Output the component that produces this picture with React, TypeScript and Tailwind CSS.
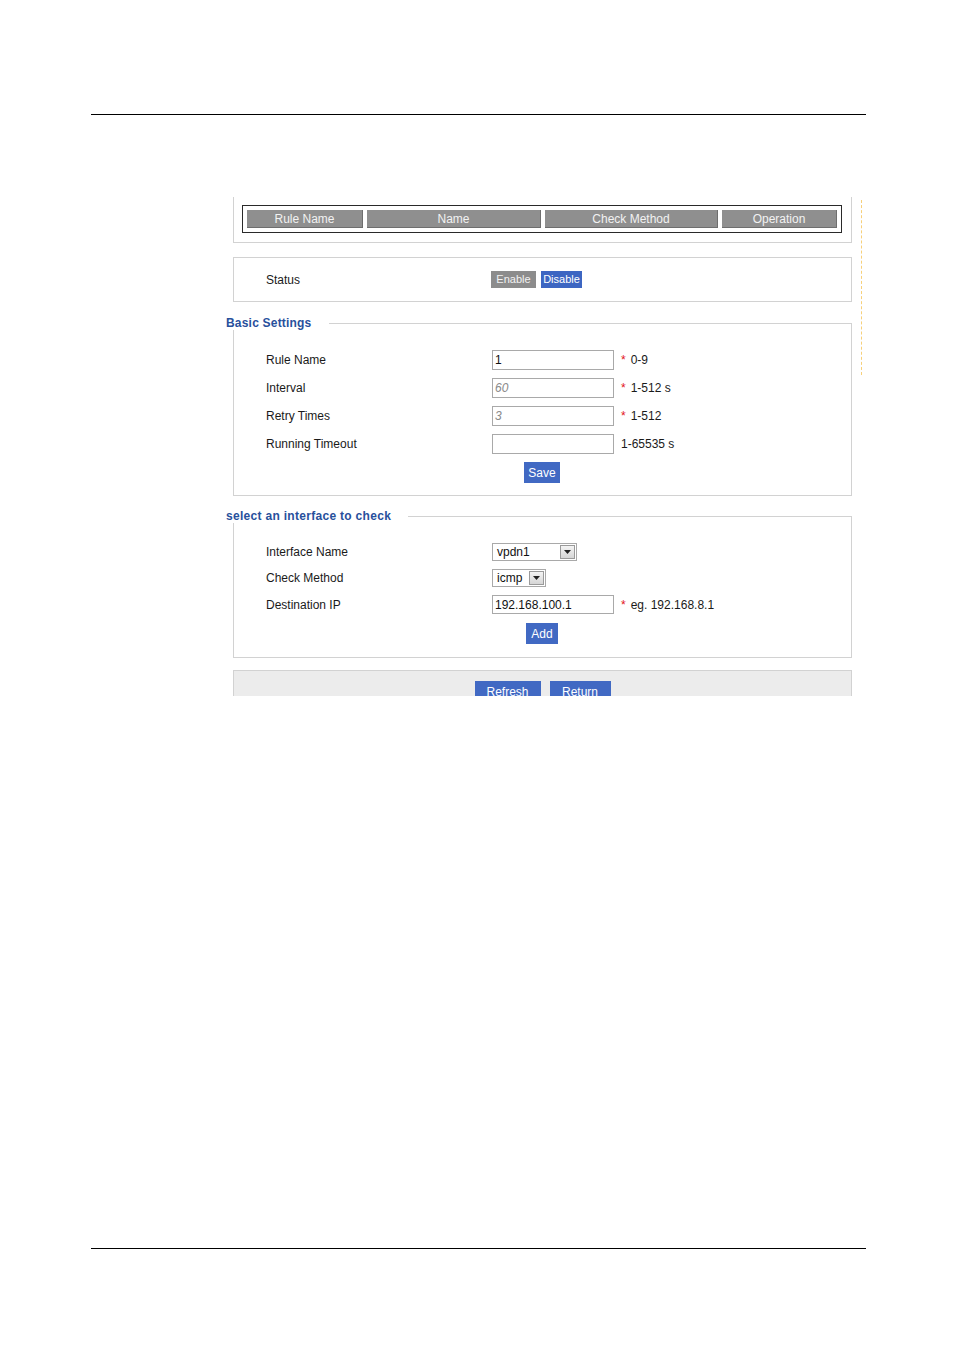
import React from "react";

const labelCls = "w-[226px] shrink-0 text-[12px] text-[#1a1a1a]";

const Hint = ({ star, text }: { star?: boolean; text: string }) => (
  <span className="ml-[7px] text-[12px] text-[#1a1a1a]">
    {star && <span className="text-[#e3151a] mr-[5px]">*</span>}
    {text}
  </span>
);

const Input = ({ value, muted, h = "h-[20px]" }: { value: string; muted?: boolean; h?: string }) => (
  <div
    className={`w-[122px] ${h} shrink-0 border border-[#a9a9a9] bg-white flex items-center pl-[2px] text-[12px] ${
      muted ? "italic text-[#8a8a8a]" : "text-[#111]"
    }`}
  >
    {value}
  </div>
);

const Select = ({ value, width }: { value: string; width: string }) => (
  <div className={`${width} h-[18px] shrink-0 border border-[#a9a9a9] bg-white flex items-center justify-between pl-[4px] pr-[1px] text-[12px] text-[#111]`}>
    <span>{value}</span>
    <span className="w-[15px] h-[14px] border border-[#9a9a9a] bg-gradient-to-b from-[#f4f4f4] to-[#d6d6d6] flex items-center justify-center">
      <svg width="7" height="4" viewBox="0 0 7 4">
        <path d="M0 0h7L3.5 4z" fill="#222" />
      </svg>
    </span>
  </div>
);

const BlueButton = ({ label, w, h = "h-[21px]" }: { label: string; w: string; h?: string }) => (
  <button className={`${w} ${h} shrink-0 bg-[#4169c3] text-white text-[12px] flex items-center justify-center`}>
    {label}
  </button>
);

export default function App() {
  return (
    <div className="w-[955px] h-[1350px] bg-white flex flex-col font-['Liberation_Sans',Arial,sans-serif] text-[12px]">
      <div className="h-[114px] shrink-0" />
      <div className="ml-[91px] w-[775px] h-px bg-black shrink-0" />
      <div className="h-[82px] shrink-0" />

      <div className="flex">
        <div className="ml-[233px] w-[619px]">
          {/* Rule list table */}
          <div className="border-x border-b border-[#d2d2d2] pt-[8px] pb-[9px] pl-[8px]">
            <div className="w-[600px] border border-[#2a2a2a] p-[4px] flex gap-[4px]">
              {[
                ["Rule Name", "w-[116px]"],
                ["Name", "w-[174px]"],
                ["Check Method", "w-[173px]"],
                ["Operation", "w-[115px]"],
              ].map(([t, w]) => (
                <div
                  key={t}
                  className={`${w} h-[18px] bg-[#8f8f8f] border-b border-r border-[#6e6e6e] text-[#f2f2f2] flex items-center justify-center`}
                >
                  {t}
                </div>
              ))}
            </div>
          </div>

          {/* Status */}
          <div className="mt-[14px] h-[45px] border border-[#d2d2d2] flex items-center pl-[32px]">
            <span className="w-[225px] shrink-0 text-[#1a1a1a]">Status</span>
            <div className="flex gap-[5px] text-[11px]">
              <button className="w-[45px] h-[17px] bg-[#8c8c8c] text-[#f2f2f2] flex items-center justify-center">Enable</button>
              <button className="w-[41px] h-[17px] bg-[#3d66c2] text-white flex items-center justify-center">Disable</button>
            </div>
          </div>

          {/* Basic Settings */}
          <fieldset className="mt-[14px] border border-[#d2d2d2]">
            <legend className="-ml-[8px] pr-[17px] leading-[14px] text-[12px] font-bold tracking-[0.2px] text-[#28509c]">
              Basic Settings
            </legend>
            <div className="pl-[32px] pt-[20px] pb-[12px] flex flex-col gap-[8px]">
              <div className="flex items-center">
                <span className={labelCls}>Rule Name</span>
                <Input value="1" />
                <Hint star text="0-9" />
              </div>
              <div className="flex items-center">
                <span className={labelCls}>Interval</span>
                <Input value="60" muted />
                <Hint star text="1-512 s" />
              </div>
              <div className="flex items-center">
                <span className={labelCls}>Retry Times</span>
                <Input value="3" muted />
                <Hint star text="1-512" />
              </div>
              <div className="flex items-center">
                <span className={labelCls}>Running Timeout</span>
                <Input value="" />
                <Hint text="1-65535 s" />
              </div>
              <div className="pl-[258px]">
                <BlueButton label="Save" w="w-[36px]" />
              </div>
            </div>
          </fieldset>

          {/* Interface check */}
          <fieldset className="mt-[13px] border border-[#d2d2d2]">
            <legend className="-ml-[8px] pr-[17px] leading-[14px] text-[12px] font-bold tracking-[0.3px] text-[#28509c]">
              select an interface to check
            </legend>
            <div className="pl-[32px] pt-[20px] pb-[13px] flex flex-col gap-[8px]">
              <div className="flex items-center">
                <span className={labelCls}>Interface Name</span>
                <Select value="vpdn1" width="w-[85px]" />
              </div>
              <div className="flex items-center">
                <span className={labelCls}>Check Method</span>
                <Select value="icmp" width="w-[54px]" />
              </div>
              <div className="flex items-center">
                <span className={labelCls}>Destination IP</span>
                <Input value="192.168.100.1" h="h-[19px]" />
                <Hint star text="eg. 192.168.8.1" />
              </div>
              <div className="pl-[260px] pt-px">
                <BlueButton label="Add" w="w-[32px]" />
              </div>
            </div>
          </fieldset>

          {/* Bottom bar */}
          <div className="mt-[12px] h-[26px] border-x border-t border-[#d2d2d2] bg-[#ececec] overflow-hidden flex justify-center gap-[9px] pt-[10px]">
            <BlueButton label="Refresh" w="w-[66px]" h="h-[22px]" />
            <BlueButton label="Return" w="w-[61px]" h="h-[22px]" />
          </div>
        </div>
        <div className="ml-[9px] mt-[3px] h-[175px] border-l border-dashed border-[#f7d07a]" />
      </div>

      <div className="mt-auto mb-[101px] ml-[91px] w-[775px] h-px bg-black shrink-0" />
    </div>
  );
}
